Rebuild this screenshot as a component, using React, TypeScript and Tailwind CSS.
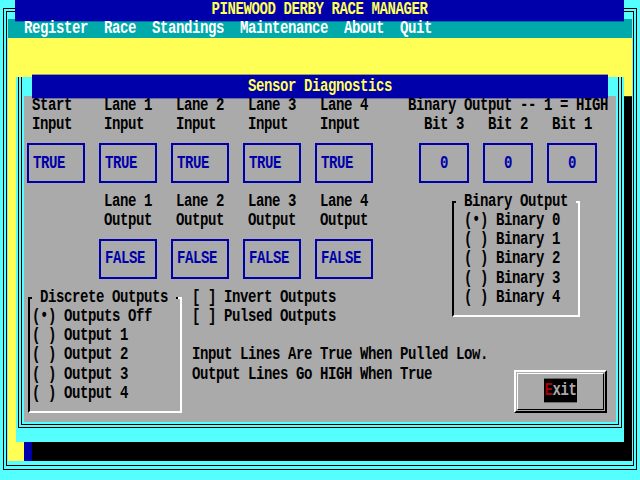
import React from "react";

const menu = ["Register", "Race", "Standings", "Maintenance", "About", "Quit"];

// text cells are 8px wide, rows are 19.2px tall (80x25 text screen)
const t = "scale-y-125";

const inputs = [
  { top: "Start", col: "col-start-2", box: "col-start-1" },
  { top: "Lane 1", col: "col-start-11", box: "col-start-10" },
  { top: "Lane 2", col: "col-start-20", box: "col-start-19" },
  { top: "Lane 3", col: "col-start-29", box: "col-start-28" },
  { top: "Lane 4", col: "col-start-38", box: "col-start-37" },
];

const bits = [
  { label: "Bit 3", col: "col-start-51", box: "col-start-50" },
  { label: "Bit 2", col: "col-start-59", box: "col-start-58" },
  { label: "Bit 1", col: "col-start-67", box: "col-start-66" },
];

const binaryRows = ["row-start-7", "row-start-8", "row-start-9", "row-start-10", "row-start-11"];
const discreteRows = ["row-start-12", "row-start-13", "row-start-14", "row-start-15", "row-start-16"];

function SensorDialog() {
  return (
    <div className="w-[608px] h-[364.8px] bg-[#55ffff] px-[2px] shadow-[16px_19.2px_0_0_#000] flex flex-col">
      <div className="border-x border-b border-black px-[2px] pb-[2px] flex flex-col">
        <div className="border-x border-b border-black px-[2px] pb-[2px] flex flex-col">
          <div className="h-[19.2px] px-[8px]">
            <div className={`h-full bg-[#0000aa] text-[#ffff55] text-center ${t}`}>Sensor Diagnostics</div>
          </div>

          <div className="grid grid-cols-[repeat(74,8px)] grid-rows-[repeat(17,19.2px)] bg-[#aaaaaa] text-black whitespace-pre">
            {/* Inputs */}
            {inputs.map((i) => (
              <React.Fragment key={i.top}>
                <div className={`${i.col} row-start-1 ${t}`}>{i.top}</div>
                <div className={`${i.col} row-start-2 ${t}`}>Input</div>
                <div className={`${i.box} row-start-3 row-span-3 self-center ml-[3px] w-[58px] h-[40px] border-2 border-[#0000aa] pl-[4px] flex items-center text-[#0000aa]`}>
                  <span className={t}>TRUE</span>
                </div>
              </React.Fragment>
            ))}

            <div className={`col-start-49 row-start-1 ${t}`}>Binary Output -- 1 = HIGH</div>
            {bits.map((b) => (
              <React.Fragment key={b.label}>
                <div className={`${b.col} row-start-2 ${t}`}>{b.label}</div>
                <div className={`${b.box} row-start-3 row-span-3 self-center ml-[3px] w-[50px] h-[40px] border-2 border-[#0000aa] flex items-center justify-center text-[#0000aa]`}>
                  <span className={t}>0</span>
                </div>
              </React.Fragment>
            ))}

            {/* Outputs */}
            {inputs.slice(1).map((i) => (
              <React.Fragment key={"o" + i.top}>
                <div className={`${i.col} row-start-6 ${t}`}>{i.top}</div>
                <div className={`${i.col} row-start-7 ${t}`}>Output</div>
                <div className={`${i.box} row-start-8 row-span-3 self-center ml-[3px] w-[58px] h-[40px] border-2 border-[#0000aa] pl-[4px] flex items-center text-[#0000aa]`}>
                  <span className={t}>FALSE</span>
                </div>
              </React.Fragment>
            ))}

            {/* Binary Output group */}
            <div className="col-start-54 row-start-6 row-span-7 my-[9.6px] ml-[4px] w-[128px] border-2 border-t-black border-l-black border-r-white border-b-white" />
            <div className="col-start-54 row-start-6 self-start mt-[9.6px] ml-[128px] w-[4px] h-[2px] bg-white" />
            <div className={`col-start-55 row-start-6 w-max bg-[#aaaaaa] ${t}`}> Binary Output </div>
            {binaryRows.map((r, n) => (
              <div key={r} className={`col-start-56 ${r} ${t}`}>
                {n === 0 ? "(•)" : "( )"} Binary {n}
              </div>
            ))}

            {/* Discrete Outputs group */}
            <div className="col-start-1 row-start-11 row-span-7 my-[9.6px] ml-[4px] w-[154px] border-2 border-t-black border-l-black border-r-white border-b-white" />
            <div className="col-start-1 row-start-11 self-start mt-[9.6px] ml-[154px] w-[4px] h-[2px] bg-white" />
            <div className={`col-start-2 row-start-11 w-max bg-[#aaaaaa] ${t}`}> Discrete Outputs </div>
            {discreteRows.map((r, n) => (
              <div key={r} className={`col-start-2 ${r} ${t}`}>
                {n === 0 ? "(•) Outputs Off" : `( ) Output ${n}`}
              </div>
            ))}

            <div className={`col-start-22 row-start-11 ${t}`}>[ ] Invert Outputs</div>
            <div className={`col-start-22 row-start-12 ${t}`}>[ ] Pulsed Outputs</div>

            <div className={`col-start-22 row-start-14 ${t}`}>Input Lines Are True When Pulled Low.</div>
            <div className={`col-start-22 row-start-15 ${t}`}>Output Lines Go HIGH When True</div>

            {/* Exit button */}
            <div className="col-start-62 row-start-15 row-span-3 self-start mt-[5px] ml-[2px] w-[93px] h-[43px] border-2 border-t-white border-l-white border-r-black border-b-black p-[1px]">
              <div className="h-full border border-t-white border-l-white border-r-black border-b-black flex items-center justify-center">
                <span className={`bg-black text-[#aaaaaa] ${t}`}>
                  <span className="text-[#aa0000]">E</span>xit
                </span>
              </div>
            </div>
          </div>
        </div>
      </div>
    </div>
  );
}

export default function App() {
  return (
    <div className="relative w-[640px] h-[480px] overflow-hidden bg-[#55ffff] font-['Liberation_Mono',monospace] text-[14px] leading-[19.2px] tracking-[-0.4px] font-bold">
      {/* outer double frame */}
      <div className="absolute left-[3px] top-[8px] right-[3px] bottom-[10px] border border-black" />
      <div className="absolute left-[6px] top-[11px] right-[6px] bottom-[14px] border border-black" />

      <div className="absolute left-[8px] top-0 w-[624px] h-[460.8px] flex flex-col">
        <div className="h-[19.2px] flex pl-[7px] pr-[8px]">
          <div className={`flex-1 bg-[#0000aa] text-[#ffff55] text-center ${t}`}>PINEWOOD DERBY RACE MANAGER</div>
        </div>
        <div className="h-[19.2px] bg-[#00aaaa] text-white flex gap-[16px] pl-[16px]">
          {menu.map((m) => (
            <span key={m} className={t}>{m}</span>
          ))}
        </div>
        <div className="flex-1 relative overflow-hidden bg-[#ffff55] pt-[38.4px] pl-[8px]">
          <SensorDialog />
          <div className="absolute left-[16px] bottom-0 w-[8px] h-[19.2px] bg-[#0000aa]" />
        </div>
      </div>
    </div>
  );
}
